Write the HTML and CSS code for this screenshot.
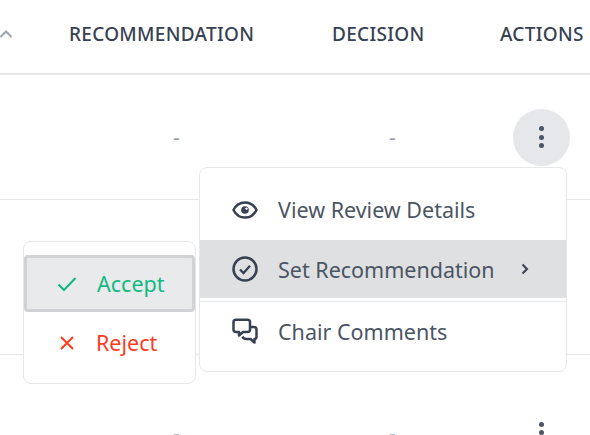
FILE: index.html
```html
<!DOCTYPE html>
<html lang="en">
<head>
<meta charset="utf-8">
<title>Reviews</title>
<link rel="stylesheet" href="styles.css">
</head>
<body>
<div class="table">
  <div class="row head">
    <div class="cell"><svg class="sort" viewBox="0 0 14 10" width="14" height="10"><path d="M1.500 8 7 2.500 12.500 8" fill="none" stroke="#9ca3af" stroke-width="2"/></svg></div>
    <div class="cell">RECOMMENDATION</div>
    <div class="cell">DECISION</div>
    <div class="cell">ACTIONS</div>
  </div>
  <div class="row r1">
    <div class="cell"></div>
    <div class="cell dash d1">-</div>
    <div class="cell dash d2">-</div>
    <div class="cell act"><button class="kebab open"><span></span><span></span><span></span></button></div>
  </div>
  <div class="row r2">
    <div class="cell"></div><div class="cell"></div><div class="cell"></div><div class="cell"></div>
  </div>
  <div class="row r3">
    <div class="cell dash wide">-</div>
    <div class="cell dash d2">-</div>
    <div class="cell act"><button class="kebab"><span></span><span></span><span></span></button></div>
  </div>
</div>

<div class="menu main">
  <div class="item">
    <svg class="ic" viewBox="0 0 26 26" width="26" height="26" fill="none" stroke="#374151" stroke-width="2.500"><path d="M1.500 13C4 8 8 5.500 13 5.500S22 8 24.500 13C22 18 18 20.500 13 20.500S4 18 1.500 13Z"/><circle cx="13" cy="13" r="3.800" fill="#374151" stroke="none"/><circle cx="14.500" cy="11.600" r="1.200" fill="#fff" stroke="none"/></svg>
    <span>View Review Details</span>
  </div>
  <div class="item on">
    <svg class="ic" viewBox="0 0 26 26" width="26" height="26" fill="none" stroke="#374151" stroke-width="2.500"><circle cx="13" cy="13" r="11.500"/><path d="M8 13.500l3.500 3.500L18 9.800" stroke-width="2.300"/></svg>
    <span>Set Recommendation</span>
    <svg class="chev" viewBox="0 0 8 12" width="8" height="12"><path d="M1.500 1.500 6 6 1.500 10.500" fill="none" stroke="#374151" stroke-width="2"/></svg>
  </div>
  <div class="item last">
    <svg class="ic" viewBox="0 0 26 26" width="26" height="26" fill="none" stroke="#374151" stroke-width="2.500" stroke-linejoin="round"><path d="M4 1.800H15.500Q18 1.800 18 4.300V11.500Q18 14 15.500 14H11L7 17.500V14H4Q1.500 14 1.500 11.500V4.300Q1.500 1.800 4 1.800Z"/><path d="M18 9H21.500Q24.500 9 24.500 11.500V18.500Q24.500 21 22.500 21V24.500L18.500 21H14Q11.500 21 10.500 18.500"/></svg>
    <span>Chair Comments</span>
  </div>
</div>

<div class="menu sub">
  <div class="opt accept focus">
    <svg viewBox="0 0 20 16" width="20" height="16"><path d="M1.500 8.500 7 14 18.500 2" fill="none" stroke="#10b981" stroke-width="2"/></svg>
    <span>Accept</span>
  </div>
  <div class="opt reject">
    <svg viewBox="0 0 16 16" width="16" height="16"><path d="M2 2 14 14M14 2 2 14" fill="none" stroke="#ff3b1f" stroke-width="2"/></svg>
    <span>Reject</span>
  </div>
</div>
</body>
</html>
```
FILE: styles.css
```css
* { box-sizing: border-box; }
html, body { margin: 0; height: 100%; }
body {
  position: relative;
  width: 590px;
  height: 435px;
  overflow: hidden;
  background: #fff;
  font-family: "Noto Sans", sans-serif;
  color: #374151;
}
.table { display: flex; flex-direction: column; }
.row {
  display: grid;
  grid-template-columns: 69px 263px 168px 90px;
  border-bottom: 1px solid #e5e7eb;
}
.cell { display: flex; align-items: center; min-width: 0; }
.head {
  height: 75px;
  padding-bottom: 6px;
  border-bottom-width: 2px;
  font-size: 19px;
  font-weight: 500;
  letter-spacing: 0.3px;
  white-space: nowrap;
}
.sort { margin-left: -1px; }
.r1 { height: 125px; }
.r2 { height: 155px; }
.r3 {
  height: 80px;
  border-bottom: 0;
  grid-template-columns: 332px 168px 90px;
  align-items: start;
}
.r3 .kebab { margin-top: 49px; }
.r3 .dash { margin-top: 76px; line-height: 4px; }
.dash { color: #9ca3af; font-size: 21px; line-height: 28px; }
.d1 { padding-left: 104px; }
.wide { padding-left: 173px; }
.d2 { padding-left: 57px; }
.kebab {
  display: flex;
  flex-direction: column;
  align-items: center;
  justify-content: center;
  flex: none;
  gap: 3.300px;
  width: 57px;
  height: 57px;
  margin-left: 13px;
  padding: 0;
  border: 0;
  border-radius: 50%;
  background: transparent;
}
.kebab.open { background: #e5e7eb; }
.kebab span { width: 5px; height: 5px; border-radius: 50%; background: #4b5563; }
.menu {
  position: absolute;
  background: #fff;
  border: 1px solid #e5e7eb;
  border-radius: 8px;
}
.main { left: 199px; top: 167px; width: 368px; height: 205px; padding-top: 11px; }
.item {
  display: flex;
  align-items: center;
  height: 61px;
  padding-left: 32px;
  font-size: 21.500px;
  color: #4b5563;
}
.item span { margin-left: 20px; }
.item.on { height: 58px; background: #dfe0e2; }
.item.last { height: 59px; margin-top: 3px; border-top: 1px solid #e5e7eb; }
.chev { margin-left: 26px; }
.sub { left: 23px; top: 241px; width: 173px; height: 143px; padding: 13px 0 0; }
.opt {
  display: flex;
  align-items: center;
  height: 59px;
  padding-left: 34px;
  font-size: 21.500px;
}
.opt span { margin-left: 20px; }
.opt.focus {
  height: 57px;
  background: #e9eaec;
  border: 3px solid #d1d2d6;
  border-radius: 4px;
  padding-left: 30px;
  margin-bottom: 1px;
}
.accept { color: #10b981; }
.reject { color: #ff3b1f; padding-left: 35px; }
.reject span { margin-left: 21px; }
```
